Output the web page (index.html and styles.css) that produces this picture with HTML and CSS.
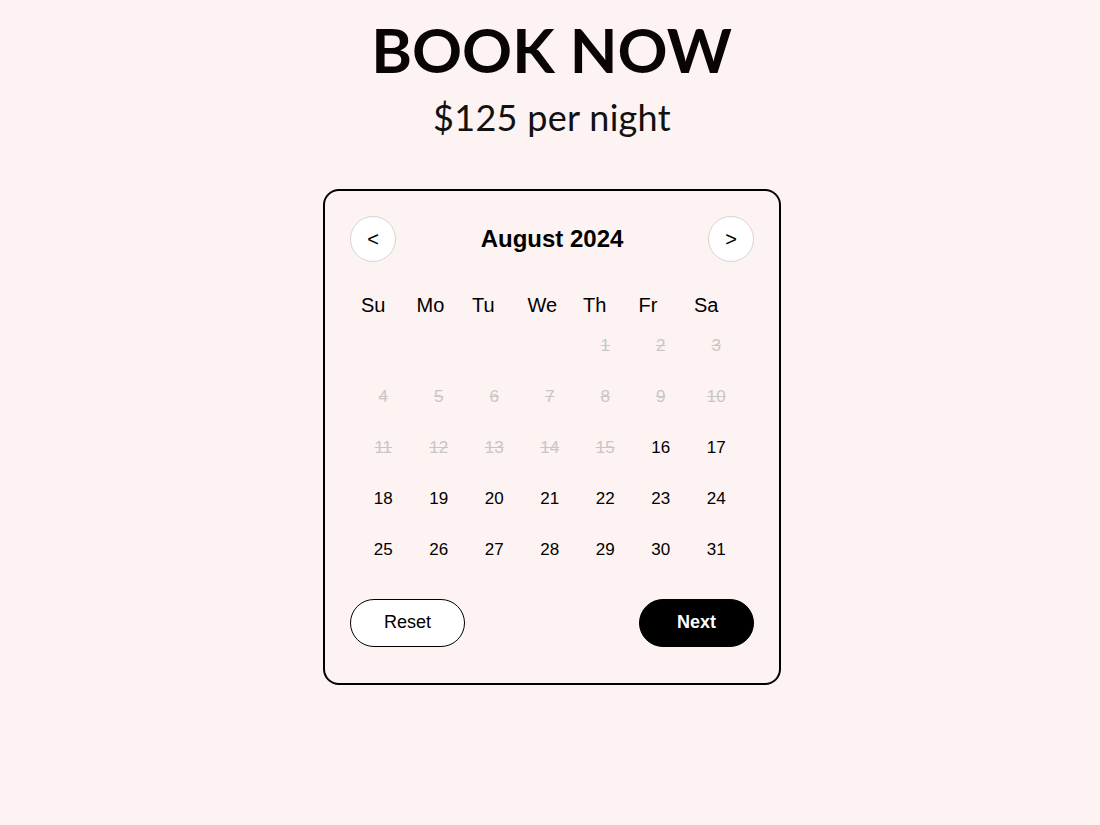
FILE: index.html
```html
<!DOCTYPE html>
<html lang="en">
<head>
<meta charset="utf-8">
<title>Book Now</title>
<link rel="stylesheet" href="styles.css">
</head>
<body>
<main class="page">
  <h1 class="title">BOOK NOW</h1>
  <p class="price">$125 per night</p>
  <section class="card">
    <div class="cal-head">
      <button class="nav">&lt;</button>
      <h2 class="month">August 2024</h2>
      <button class="nav">&gt;</button>
    </div>
    <div class="grid">
      <div class="wd">Su</div><div class="wd">Mo</div><div class="wd">Tu</div><div class="wd">We</div><div class="wd">Th</div><div class="wd">Fr</div><div class="wd">Sa</div>
      <div class="day"></div><div class="day"></div><div class="day"></div><div class="day"></div>
      <div class="day off">1</div><div class="day off">2</div><div class="day off">3</div>
      <div class="day off">4</div><div class="day off">5</div><div class="day off">6</div><div class="day off">7</div><div class="day off">8</div><div class="day off">9</div><div class="day off">10</div>
      <div class="day off">11</div><div class="day off">12</div><div class="day off">13</div><div class="day off">14</div><div class="day off">15</div><div class="day">16</div><div class="day">17</div>
      <div class="day">18</div><div class="day">19</div><div class="day">20</div><div class="day">21</div><div class="day">22</div><div class="day">23</div><div class="day">24</div>
      <div class="day">25</div><div class="day">26</div><div class="day">27</div><div class="day">28</div><div class="day">29</div><div class="day">30</div><div class="day">31</div>
    </div>
    <div class="actions">
      <button class="btn reset">Reset</button>
      <button class="btn next">Next</button>
    </div>
  </section>
</main>
</body>
</html>
```
FILE: styles.css
```css
html, body {
  margin: 0;
  padding: 0;
}
body {
  background: #fdf3f2;
  color: #000;
  font-family: "Liberation Sans", Arial, sans-serif;
}
.page {
  display: flex;
  flex-direction: column;
  align-items: center;
  padding-top: 18px;
}
.title {
  margin: 0 0 0 3px;
  font-family: Lato, "Open Sans", sans-serif;
  font-weight: 700;
  font-size: 62px;
  line-height: 62px;
  color: #0a0505;
}
.price {
  margin: 19px 0 0 4px;
  font-family: Lato, "Open Sans", sans-serif;
  font-weight: 400;
  font-size: 36px;
  line-height: 36px;
  letter-spacing: 0.3px;
  color: #111;
}
.card {
  margin: 54px 0 0 4px;
  width: 404px;
  padding: 25px 25px 36px;
  border: 2px solid #000;
  border-radius: 16px;
  background: #fdf3f2;
}
.cal-head {
  display: flex;
  align-items: center;
  justify-content: space-between;
  height: 46px;
}
.nav {
  width: 46px;
  height: 46px;
  border-radius: 50%;
  border: 1px solid #d8d4d4;
  background: #fff;
  font-family: "Liberation Sans", Arial, sans-serif;
  font-size: 20px;
  color: #000;
  padding: 0;
  display: flex;
  align-items: center;
  justify-content: center;
}
.month {
  margin: 0;
  font-size: 24px;
  font-weight: 700;
  line-height: 1;
}
.grid {
  margin: 28px 0 0 5.5px;
  display: grid;
  grid-template-columns: repeat(7, 55.5px);
  grid-template-rows: 30px repeat(5, 51px);
}
.wd {
  font-size: 20px;
  line-height: 30px;
  padding-left: 5.5px;
}
.day {
  font-size: 17px;
  line-height: 51px;
  text-align: center;
}
.day.off {
  color: #c9c6c6;
  text-decoration: line-through;
}
.actions {
  margin-top: 23.5px;
  display: flex;
  justify-content: space-between;
}
.btn {
  width: 115px;
  height: 48px;
  border-radius: 24px;
  font-family: "Liberation Sans", Arial, sans-serif;
  font-size: 18px;
  padding: 0;
}
.reset {
  background: #fff;
  border: 1px solid #000;
  color: #000;
}
.next {
  background: #000;
  border: 1px solid #000;
  color: #fff;
  font-weight: 700;
}
```
